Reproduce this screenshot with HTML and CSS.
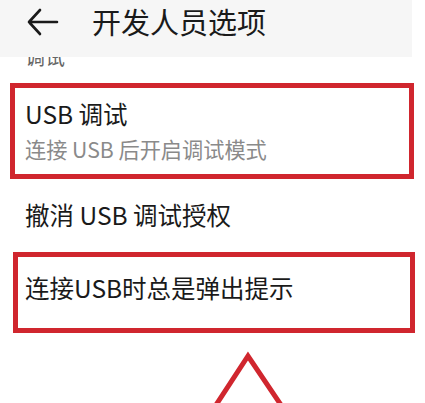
FILE: index.html
```html
<!DOCTYPE html>
<html lang="zh">
<head>
<meta charset="utf-8">
<link rel="stylesheet" href="styles.css">
</head>
<body>
<div class="page">
  <header class="header">
    <svg class="back" width="32" height="28" viewBox="0 0 32 28">
      <path d="M13 2 L2 14 L13 26 M2 14 H30" fill="none" stroke="#1a1a1a" stroke-width="2.6" stroke-linecap="round" stroke-linejoin="round"/>
    </svg>
    <h1 class="title">开发人员选项</h1>
  </header>
  <div class="clip"><span class="clip-text">调试</span></div>
  <div class="item boxed first">
    <div class="item-title">USB 调试</div>
    <div class="item-sub">连接 USB 后开启调试模式</div>
  </div>
  <div class="item plain">
    <div class="item-title">撤消 USB 调试授权</div>
  </div>
  <div class="item boxed second">
    <div class="item-title">连接USB时总是弹出提示</div>
  </div>
  <svg class="arrow" width="425" height="70" viewBox="0 0 425 70">
    <path d="M216 72 L248 23 L281 72" fill="none" stroke="#d0262e" stroke-width="5" stroke-linejoin="miter"/>
  </svg>
</div>
</body>
</html>
```
FILE: styles.css
```css
html, body {
  margin: 0;
  padding: 0;
  background: #ffffff;
}
body {
  width: 425px;
  height: 403px;
  overflow: hidden;
  font-family: "Noto Sans CJK SC", "Noto Sans", sans-serif;
  color: #1a1a1a;
}
.page {
  display: flex;
  flex-direction: column;
}
.header {
  width: 412px;
  height: 57px;
  background: #f6f6f6;
  display: flex;
  align-items: center;
  padding-left: 27px;
  box-sizing: border-box;
  position: relative;
  z-index: 1;
}
.back {
  display: block;
  margin-top: -14px;
}
.title {
  margin: -14px 0 0 33px;
  font-size: 29px;
  font-weight: 400;
  line-height: 1;
  color: #1a1a1a;
}
.clip {
  height: 10px;
  overflow: hidden;
  padding-left: 25px;
}
.clip-text {
  display: block;
  font-size: 20px;
  line-height: 20px;
  margin-top: -10px;
  color: #666;
}
.item {
  box-sizing: border-box;
  display: flex;
  flex-direction: column;
  justify-content: center;
}
.item-title {
  font-size: 24.5px;
  line-height: 30px;
  color: #1a1a1a;
}
.item-sub {
  font-size: 21.2px;
  line-height: 28px;
  color: #8a8a8a;
  margin-top: 6px;
}
.boxed {
  border: 5px solid #d0262e;
}
.first {
  margin: 16px 0 0 10px;
  width: 404px;
  height: 96px;
  padding-left: 10px;
  padding-bottom: 1px;
}
.plain {
  height: 73px;
  padding-left: 25px;
  padding-bottom: 2px;
}
.second {
  margin-left: 13px;
  width: 402px;
  height: 81px;
  padding-left: 7px;
  padding-bottom: 10px;
}
.arrow {
  display: block;
}
```
